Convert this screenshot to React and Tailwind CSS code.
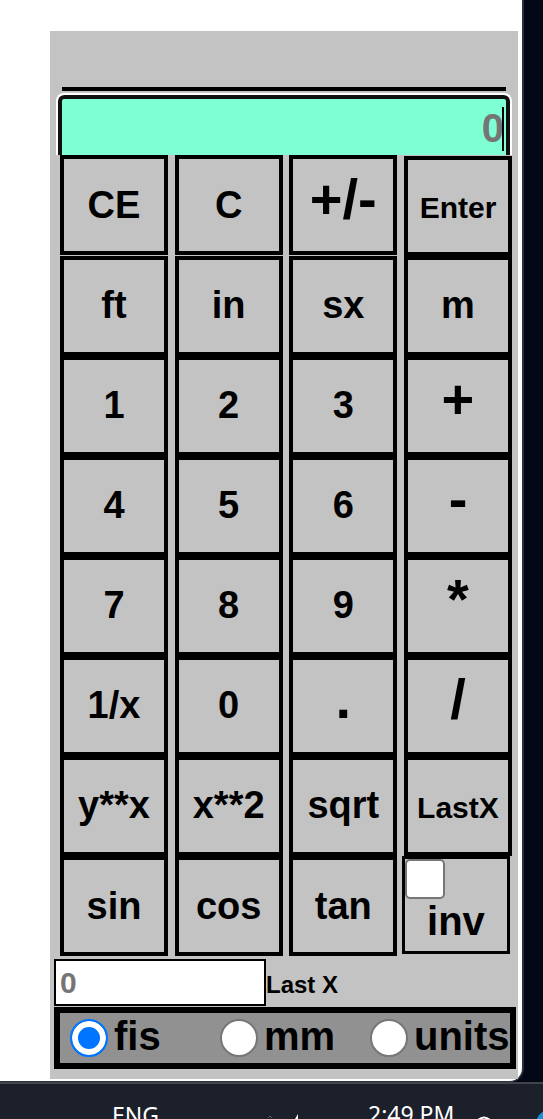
const rows = [
  ['CE', 'C', '+/-', 'Enter'],
  ['ft', 'in', 'sx', 'm'],
  ['1', '2', '3', '+'],
  ['4', '5', '6', '-'],
  ['7', '8', '9', '*'],
  ['1/x', '0', '.', '/'],
  ['y**x', 'x**2', 'sqrt', 'LastX'],
];

const sizes = {
  Enter: 'text-[30px]',
  LastX: 'text-[30px]',
  '+/-': 'text-[56px]',
  '+': 'text-[56px]',
  '-': 'text-[56px]',
  '*': 'text-[56px]',
  '/': 'text-[56px]',
  '.': 'text-[56px]',
};

function Key({ label, className = '' }) {
  return (
    <button
      type="button"
      className={`h-[100px] w-[108px] border-4 border-black bg-[#c3c3c3] text-center text-[38px] leading-[44px] font-bold ${className}`}
    >
      <span className={`leading-[0] ${sizes[label] || 'text-[38px]'}`}>{label}</span>
    </button>
  );
}

function Unit({ id, label, checked }) {
  return (
    <div className="flex h-[50px] min-w-0 items-center pl-[10px]">
      <input
        id={id}
        type="radio"
        name="unit"
        defaultChecked={checked}
        className="size-[38px] shrink-0 appearance-none rounded-full border-2 border-[#767676] bg-white checked:border-[#0075ff] checked:bg-[#0075ff] checked:shadow-[inset_0_0_0_6px_#fff]"
      />
      <label htmlFor={id} className="pb-1 pl-[6px] text-[40px] leading-[44px]">
        {label}
      </label>
    </div>
  );
}

export default function App() {
  return (
    <div className="overflow-hidden bg-[#030817] font-['Liberation_Sans',Arial,sans-serif] font-bold text-black">
      <div className="mr-[19px] rounded-br-[14px] border-r-2 border-b border-[#2b323e] bg-white pt-[31px] pb-[2px]">
        <main className="mr-1 ml-[50px] bg-[#c3c3c3] pt-14 pb-[10px]">
          <hr className="mr-3 ml-3 border-0 border-t-4 border-black" />
          <div className="relative mr-[6px] ml-[6px] mt-[2px] h-[62px] overflow-hidden rounded-t-[8px] border-2 border-b-0 border-white">
            <input
              type="text"
              aria-label="Display"
              placeholder="0"
              className="block h-[70px] w-full rounded-t-[6px] border-4 border-[#101010] bg-[#7fffd4] pr-[2px] pb-[4px] text-right text-[40px] font-bold placeholder:text-[#757575] outline-none"
            />
            <span className="absolute top-3 right-[6px] h-11 w-[2px] bg-black" />
          </div>
          <div className="mr-[6px] ml-[10px]">
            {rows.map((row, i) => (
              <div key={row[0]} className={`flex justify-between ${i === 0 ? 'h-[101px]' : 'h-[100px]'}`}>
                {row.map((label) => (
                  <Key
                    key={label}
                    label={label}
                    className={label === 'Enter' ? 'self-end pb-[2px]' : i > 0 ? 'pb-[2px]' : ''}
                  />
                ))}
              </div>
            ))}
            <div className="flex justify-between">
              <Key label="sin" />
              <Key label="cos" />
              <Key label="tan" />
              <div className="mr-[2px] -ml-[2px] h-[98px] w-[108px] border-[3px] border-black">
                <input
                  id="inverse"
                  type="checkbox"
                  className="block size-10 appearance-none rounded-[5px] border-2 border-[#767676] bg-white checked:bg-[#0075ff]"
                />
                <label htmlFor="inverse" className="block text-center text-[40px] leading-[44px]">
                  inv
                </label>
              </div>
            </div>
          </div>
          <div className="mt-[3px] ml-1 flex h-12">
            <input
              id="lastx"
              type="text"
              placeholder="0"
              className="h-[47px] w-[212px] border-2 border-black bg-white pl-1 text-[30px] font-bold placeholder:text-[#757575] outline-none"
            />
            <label htmlFor="lastx" className="pt-3 text-[24px] leading-[28px]">
              Last X
            </label>
          </div>
          <div className="mr-[2px] ml-1 grid grid-cols-3 border-[6px] border-black bg-[#919191]">
            <Unit id="fis" label="fis" checked />
            <Unit id="mm" label="mm" />
            <Unit id="units" label="units" />
          </div>
        </main>
      </div>
      <footer className="flex h-[37px] overflow-hidden border-t-2 border-[#41444b] bg-[#1b202b] font-['Noto_Sans',sans-serif] text-[23px] leading-[30px] font-normal text-white">
        <span className="mt-4 ml-[112px] w-[154px]">ENG</span>
        <svg className="mt-[29px] h-[6px] w-[102px]" viewBox="0 0 102 6" fill="none" aria-hidden="true">
          <path d="M2 5l2-2 2 2" stroke="#5d626b" />
          <path d="M29 6l3-5v5z" fill="#fff" />
        </svg>
        <span className="mt-[15px] flex-1 whitespace-nowrap">2:49 PM</span>
        <svg className="h-[35px] w-[67px]" viewBox="0 0 67 35" fill="none" aria-hidden="true">
          <path d="M2 36q6-5 12 0" stroke="#fff" strokeWidth="2" />
          <circle cx="74" cy="40" r="14" fill="#1493dc" />
        </svg>
      </footer>
    </div>
  );
}
